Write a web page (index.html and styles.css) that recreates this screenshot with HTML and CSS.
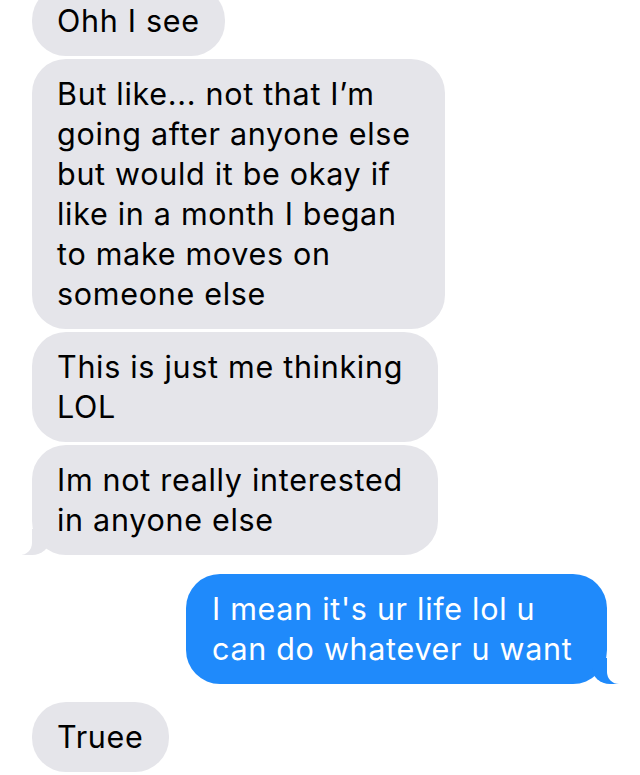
FILE: index.html
```html
<!DOCTYPE html>
<html lang="en">
<head>
  <meta charset="UTF-8" />
  <title>Messages</title>
  <link rel="stylesheet" href="styles.css">
</head>
<body>
  <div class="thread">
    <div class="msg them">Ohh I see</div>
    <div class="msg them">But like... not that I’m going after anyone else but would it be okay if like in a month I began to make moves on someone else</div>
    <div class="msg them narrow">This is just me thinking LOL</div>
    <div class="msg them narrow tail">Im not really interested in anyone else</div>

    <div class="msg me tail">I mean it's ur life lol u can do whatever u want</div>

    <div class="msg them gap">Truee</div>
  </div>
</body>
</html>
```

FILE: styles.css
```css
body {
  margin: 0;
  background: #fff;
  font-family: Inter, "Liberation Sans", Arial, sans-serif;
  overflow: hidden;
}
.thread {
  display: flex;
  flex-direction: column;
  gap: 3px;
  margin-top: -14px;
  padding: 0 32px;
}
.msg {
  position: relative;
  max-width: 363px;
  padding: 15px 25px;
  border-radius: 34px;
  font-size: 30.5px;
  line-height: 40px;
  letter-spacing: 0.7px;
}
.them {
  align-self: flex-start;
  background: #e5e5ea;
  color: #000;
}
.narrow { max-width: 356px; }
.me {
  align-self: flex-end;
  margin-top: 16px;
  margin-right: 1px;
  max-width: 370px;
  padding-left: 26px;
  background: #1f8afb;
  color: #fff;
}
.gap { margin-top: 15px; }

/* bubble tails */
.tail::before,
.tail::after {
  content: '';
  position: absolute;
  bottom: 0;
  height: 26px;
}
.them.tail::before {
  left: -10px;
  width: 28px;
  background: #e5e5ea;
  border-bottom-right-radius: 18px 16px;
}
.them.tail::after {
  left: -30px;
  width: 30px;
  background: #fff;
  border-bottom-right-radius: 12px;
}
.me.tail::before {
  right: -13px;
  width: 28px;
  background: #1f8afb;
  border-bottom-left-radius: 18px 16px;
}
.me.tail::after {
  right: -33px;
  width: 33px;
  background: #fff;
  border-bottom-left-radius: 12px;
}
```
